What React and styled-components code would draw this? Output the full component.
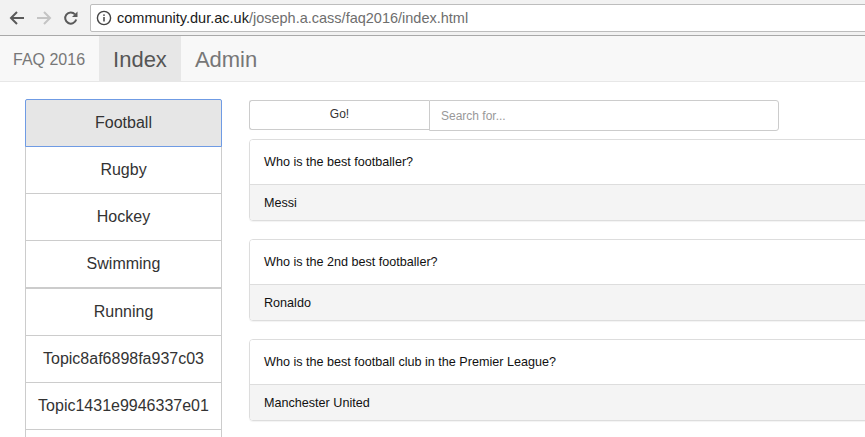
import React from "react"
import styled, { createGlobalStyle } from "styled-components"

const GlobalStyle = createGlobalStyle`
   html, body {
      margin: 0;
      padding: 0;
      overflow: hidden;
      background: #fff;
      font-family: "Liberation Sans", Arial, sans-serif;
   }
`

const topics = [
   "Football",
   "Rugby",
   "Hockey",
   "Swimming",
   "Running",
   "Topic8af6898fa937c03",
   "Topic1431e9946337e01",
   "",
]

const faqs = [
   { q: "Who is the best footballer?", a: "Messi" },
   { q: "Who is the 2nd best footballer?", a: "Ronaldo" },
   { q: "Who is the best football club in the Premier League?", a: "Manchester United" },
]

export default function App() {
   return (
      <Page>
         <GlobalStyle />
         <Chrome>
            <NavIcons>
               <IconBtn>
                  <svg width="16" height="16" viewBox="0 0 16 16">
                     <path d="M15 8H2.5M8 2L2 8l6 6" fill="none" stroke="#5a5a5a" strokeWidth="2" />
                  </svg>
               </IconBtn>
               <IconBtn>
                  <svg width="16" height="16" viewBox="0 0 16 16">
                     <path d="M1 8h12.5M8 2l6 6-6 6" fill="none" stroke="#c4c4c4" strokeWidth="2" />
                  </svg>
               </IconBtn>
               <IconBtn>
                  <svg width="16" height="16" viewBox="0 0 16 16">
                     <path d="M13.2 9.5A5.6 5.6 0 1 1 12 4.3" fill="none" stroke="#5a5a5a" strokeWidth="2" />
                     <path d="M14.5 1.5v5.5H9z" fill="#5a5a5a" />
                  </svg>
               </IconBtn>
            </NavIcons>
            <Omnibox>
               <svg width="16" height="16" viewBox="0 0 16 16">
                  <circle cx="8" cy="8" r="6.6" fill="none" stroke="#444" strokeWidth="1.4" />
                  <rect x="7.25" y="7" width="1.5" height="4.5" fill="#444" />
                  <rect x="7.25" y="4.4" width="1.5" height="1.5" fill="#444" />
               </svg>
               <Url>
                  community.dur.ac.uk<UrlPath>/joseph.a.cass/faq2016/index.html</UrlPath>
               </Url>
            </Omnibox>
         </Chrome>
         <Navbar>
            <Brand>FAQ 2016</Brand>
            <NavLink $active>Index</NavLink>
            <NavLink>Admin</NavLink>
         </Navbar>
         <Content>
            <TopicList>
               {topics.map((t, i) => (
                  <Topic key={i} $active={i === 0} $split={i === 4}>
                     {t}
                  </Topic>
               ))}
            </TopicList>
            <Main>
               <SearchRow>
                  <GoButton>Go!</GoButton>
                  <SearchInput placeholder="Search for..." />
               </SearchRow>
               {faqs.map((f) => (
                  <Panel key={f.q}>
                     <PanelHeading>{f.q}</PanelHeading>
                     <PanelBody>{f.a}</PanelBody>
                  </Panel>
               ))}
            </Main>
         </Content>
      </Page>
   )
}

const Page = styled.div`
   width: 865px;
   height: 437px;
   overflow: hidden;
`

const Chrome = styled.div`
   height: 35px;
   background: #f2f2f2;
   border-bottom: 1px solid #a9a9a9;
   display: flex;
   align-items: center;
   padding-left: 9px;
   box-sizing: content-box;
`

const NavIcons = styled.div`
   display: flex;
   gap: 11px;
   margin-right: 11px;
`

const IconBtn = styled.div`
   width: 16px;
   height: 16px;
   display: flex;
`

const Omnibox = styled.div`
   flex: 1;
   height: 26px;
   margin-right: -20px;
   background: #fff;
   border: 1px solid #bdbdbd;
   border-radius: 2px;
   display: flex;
   align-items: center;
   padding-left: 5px;
   gap: 5px;
`

const Url = styled.span`
   font-size: 14.5px;
   color: #1a1a1a;
   font-family: "Liberation Sans", Arial, sans-serif;
`

const UrlPath = styled.span`
   color: #6e6e6e;
`

const Navbar = styled.nav`
   height: 45px;
   background: #f8f8f8;
   border-bottom: 1px solid #e7e7e7;
   display: flex;
   align-items: stretch;
`

const Brand = styled.div`
   display: flex;
   align-items: center;
   padding: 2px 14px 0 13px;
   font-size: 16px;
   color: #777;
`

const NavLink = styled.div`
   display: flex;
   align-items: center;
   padding: 3px 14px 0;
   font-size: 22px;
   color: ${(p) => (p.$active ? "#555" : "#777")};
   background: ${(p) => (p.$active ? "#e7e7e7" : "transparent")};
`

const Content = styled.div`
   display: flex;
   padding-top: 17px;
   padding-left: 25px;
   gap: 27px;
`

const TopicList = styled.div`
   width: 197px;
   flex-shrink: 0;
   display: flex;
   flex-direction: column;
`

const Topic = styled.div`
   height: 46px;
   display: flex;
   align-items: center;
   justify-content: center;
   font-size: 16px;
   color: #333;
   background: ${(p) => (p.$active ? "#e6e6e6" : "#fff")};
   border: 1px solid ${(p) => (p.$active ? "#6f9be4" : "#ccc")};
   border-top-width: ${(p) => (p.$split ? "2px" : "1px")};
   margin-top: -1px;
   position: ${(p) => (p.$active ? "relative" : "static")};
   z-index: ${(p) => (p.$active ? 1 : 0)};
   box-sizing: content-box;

   &:first-child {
      margin-top: 0;
      border-radius: 2px 2px 0 0;
   }
`

const Main = styled.div`
   width: 700px;
   flex-shrink: 0;
   display: flex;
   flex-direction: column;
`

const SearchRow = styled.div`
   display: flex;
   margin-top: 1px;
   margin-bottom: 8px;
`

const GoButton = styled.div`
   width: 180px;
   height: 30px;
   box-sizing: border-box;
   border: 1px solid #ccc;
   border-right: none;
   border-radius: 3px 0 0 3px;
   background: #fff;
   display: flex;
   align-items: center;
   justify-content: center;
   padding-bottom: 3px;
   font-size: 12px;
   color: #333;
`

const SearchInput = styled.input`
   width: 350px;
   height: 31px;
   box-sizing: border-box;
   border: 1px solid #ccc;
   border-radius: 0 3px 3px 0;
   padding: 0 11px;
   font-family: "Liberation Sans", Arial, sans-serif;
   font-size: 12px;
   color: #555;
   outline: none;

   &::placeholder {
      color: #999;
   }
`

const Panel = styled.div`
   border: 1px solid #ddd;
   border-radius: 4px;
   margin-bottom: 18px;
   overflow: hidden;
   box-shadow: 0 1px 1px rgba(0, 0, 0, 0.05);
`

const PanelHeading = styled.div`
   height: 44px;
   display: flex;
   align-items: center;
   padding: 0 14px;
   font-size: 12.6px;
   color: #111;
   background: #fff;
   border-bottom: 1px solid #ddd;
`

const PanelBody = styled.div`
   height: 35px;
   display: flex;
   align-items: center;
   padding: 0 14px;
   font-size: 12.6px;
   color: #111;
   background: #f4f4f4;
`
